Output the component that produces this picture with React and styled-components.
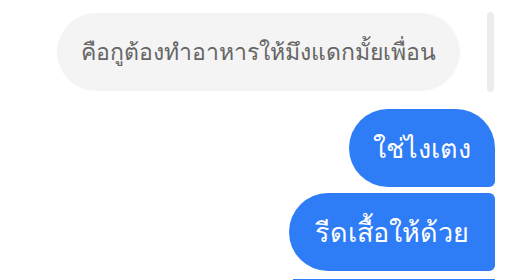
import React from "react";
import styled, { createGlobalStyle } from "styled-components";

const GlobalStyle = createGlobalStyle`
    body {
        margin: 0;
        background: #ffffff;
        font-family: "Liberation Sans", sans-serif;
    }
`;

const Page = styled.div`
    width: 510px;
    height: 280px;
    overflow: hidden;
    padding-top: 12px;
    box-sizing: border-box;
`;

const IncomingRow = styled.div`
    display: flex;
    align-items: center;
    padding-left: 57px;
`;

const Track = styled.div`
    width: 7px;
    height: 80px;
    margin-left: auto;
    margin-right: 16px;
    border-radius: 4px;
    background: #ececec;
`;

const Bubble = styled.div`
    height: 78px;
    display: flex;
    align-items: center;
    justify-content: center;
    padding: 0 ${(p) => p.$pad || 24}px;
    box-sizing: border-box;
    white-space: nowrap;
    font-size: ${(p) => p.$size}px;
    border-radius: ${(p) => p.$radius};
    background: ${(p) => (p.$mine ? "#2e7cf6" : "#f4f4f4")};
    color: ${(p) => (p.$mine ? "#ffffff" : "#666666")};
`;

const Outgoing = styled.div`
    display: flex;
    flex-direction: column;
    align-items: flex-end;
    gap: 6px;
    margin-top: 17px;
    padding-right: 15px;
`;

const Tail = styled.div`
    width: 202px;
    height: 20px;
    margin-top: 2px;
    background: #2e7cf6;
`;

export default function App() {
    return (
        <Page>
            <GlobalStyle />
            <IncomingRow>
                <Bubble $size={23} $radius="40px">
                    คือกูต้องทำอาหารให้มึงแดกมั้ยเพื่อน
                </Bubble>
                <Track />
            </IncomingRow>
            <Outgoing>
                <Bubble $mine $size={27} $radius="40px 40px 6px 40px">
                    ใช่ไงเตง
                </Bubble>
                <Bubble $mine $size={27} $pad={26} $radius="40px 6px 6px 40px">
                    รีดเสื้อให้ด้วย
                </Bubble>
                <Tail />
            </Outgoing>
        </Page>
    );
}
